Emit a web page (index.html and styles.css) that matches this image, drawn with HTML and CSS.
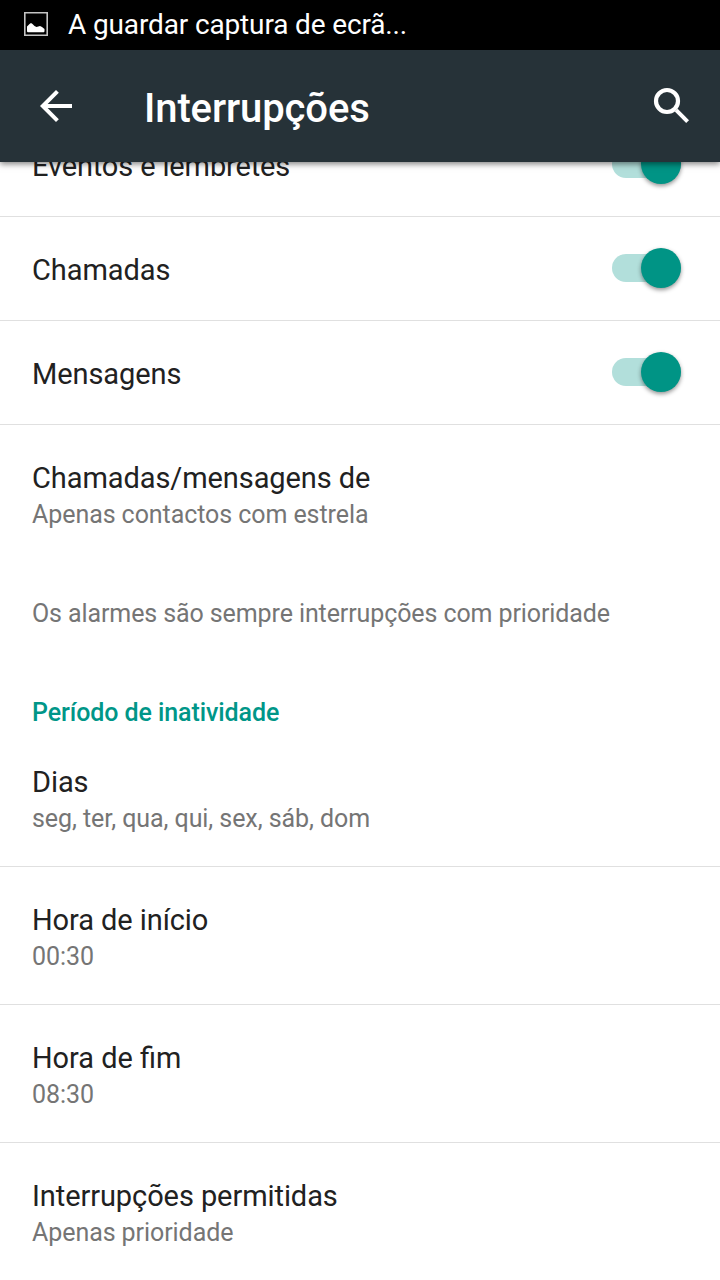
FILE: index.html
```html
<!DOCTYPE html>
<html lang="pt">
<head>
<meta charset="utf-8">
<title>Interrupções</title>
<link rel="stylesheet" href="styles.css">
</head>
<body>
<div class="status">
  <svg class="pic" width="24" height="24" viewBox="0 0 24 24"><path fill="none" stroke="#c4c4c4" stroke-width="1.6" d="M.8 .8h22.4v22.4H.8z"/><path fill="#fff" d="M3 19.500v-5l2.500-2.500 1.500-1 1.500 1 2 2 2 1 3.500-1 2 1 2.500 2v2.500l-.7.800H3.700z"/></svg>
  <span class="ticker">A guardar captura de ecrã...</span>
</div>
<header class="bar">
  <svg class="back" width="48" height="48" viewBox="0 0 24 24"><path fill="#fff" d="M20 11H7.830l5.590-5.590L12 4l-8 8 8 8 1.410-1.410L7.830 13H20v-2z"/></svg>
  <h1>Interrupções</h1>
  <svg class="search" width="48" height="48" viewBox="0 0 24 24"><g fill="none" stroke="#fff"><circle cx="9.500" cy="9.500" r="5.500" stroke-width="2.100"/><path stroke-width="2" d="M14.100 14.100L19.800 19.800"/></g></svg>
</header>
<main class="list">
  <div class="row toggle first"><span class="title long">Eventos e lembretes</span><span class="switch"><i class="thumb"></i></span></div>
  <div class="row toggle"><span class="title">Chamadas</span><span class="switch"><i class="thumb"></i></span></div>
  <div class="row toggle"><span class="title">Mensagens</span><span class="switch"><i class="thumb"></i></span></div>
  <div class="row plain"><span class="title">Chamadas/mensagens de</span><span class="sub">Apenas contactos com estrela</span></div>
  <p class="note sub">Os alarmes são sempre interrupções com prioridade</p>
  <h2>Período de inatividade</h2>
  <div class="row"><span class="title">Dias</span><span class="sub">seg, ter, qua, qui, sex, sáb, dom</span></div>
  <div class="row"><span class="title">Hora de início</span><span class="sub">00:30</span></div>
  <div class="row"><span class="title ligature">Hora de fim</span><span class="sub">08:30</span></div>
  <div class="row plain"><span class="title">Interrupções permitidas</span><span class="sub">Apenas prioridade</span></div>
</main>
</body>
</html>
```
FILE: styles.css
```css
* { box-sizing: border-box; }
body { margin: 0; width: 720px; height: 1280px; overflow: hidden; display: flex; flex-direction: column; background: #fff; font-family: Roboto, sans-serif; color: #212121; }
.status { flex: none; height: 50px; background: #000; color: #fff; display: flex; align-items: center; gap: 20px; padding: 0 24px; font-size: 28px; line-height: 50px; }
.pic { margin-top: -2px; }
.ticker { letter-spacing: -0.14px; }
.bar { flex: none; height: 112px; background: #263238; color: #fff; display: flex; align-items: center; padding: 0 24px 0 32px; box-shadow: 0 2px 6px rgba(0,0,0,.5); z-index: 1; }
.bar h1 { margin: 6px auto 0 64px; font-size: 40px; line-height: 48px; font-weight: 500; letter-spacing: -0.1px; }
.list { flex: none; height: 1118px; overflow: hidden; }
.row { height: 138px; padding: 34px 32px 0; display: flex; flex-direction: column; border-bottom: 1px solid #e0e0e0; }
.title { font-size: 29px; line-height: 38px; margin-bottom: 1px; letter-spacing: -0.08px; }
.title.long { letter-spacing: -0.14px; }
.title.ligature { letter-spacing: normal; font-size: 28.9px; }
.sub { font-size: 25px; line-height: 34px; color: #757575; letter-spacing: -0.07px; }
.toggle { height: 104px; padding: 0 39px 0 32px; flex-direction: row; align-items: center; justify-content: space-between; }
.toggle .title { margin: 0; padding-top: 2px; }
.first { margin-top: -49px; }
.plain { border: 0; }
.switch { width: 69px; height: 28px; margin-top: -1px; border-radius: 14px; background: #b2dfdb; display: flex; align-items: center; justify-content: flex-end; }
.thumb { width: 40px; height: 40px; border-radius: 50%; background: #009485; box-shadow: 0 2px 4px rgba(0,0,0,.42); }
.note { margin: 0; padding: 34px 32px 0; height: 101px; letter-spacing: -0.1px; }
h2 { margin: 0; padding: 32px 32px 0; height: 65px; font-size: 25px; line-height: 34px; font-weight: 500; color: #009688; letter-spacing: -0.09px; }
```
